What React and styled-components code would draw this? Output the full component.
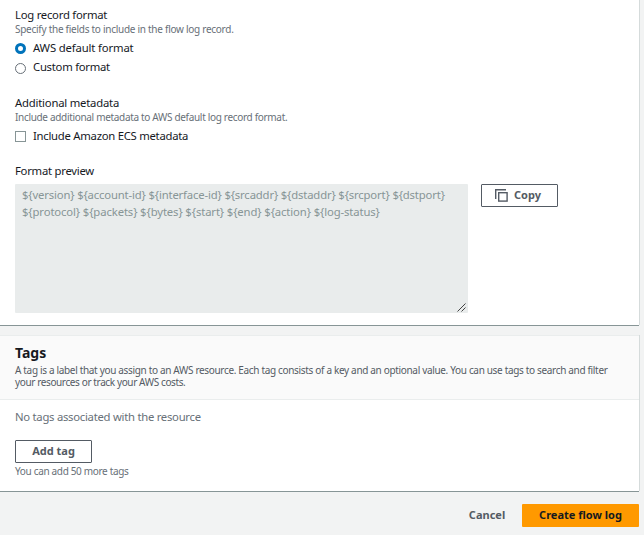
import React from "react";
import styled, { createGlobalStyle } from "styled-components";

const GlobalStyle = createGlobalStyle`
  * { box-sizing: border-box; }
  body {
    margin: 0;
    background: #f2f3f3;
    color: #16191f;
    font-family: "Noto Sans", "Open Sans", sans-serif;
    font-size: 12px;
    overflow: hidden;
  }
`;

const Page = styled.main`
  width: 644px;
  height: 535px;
  display: flex;
  flex-direction: column;
  align-items: flex-start;
  background: #f2f3f3;
`;

const Panel = styled.section`
  width: 639px;
  height: ${(p) => p.$height}px;
  margin-bottom: ${(p) => p.$gap}px;
  background: #fff;
  border-top: ${(p) => (p.$open ? "0" : "1px solid #eaeded")};
  box-shadow: 0 1px 0 #879596, 1px 0 0 #d5dbdb;
`;

const FormatBody = styled.div`
  padding: 7px 15px 0;
`;

const Text = styled.span`
  letter-spacing: ${(p) => p.$track || 0}px;
  white-space: nowrap;
`;

const Label = styled.h3`
  margin: 0;
  font-size: 11.3px;
  font-weight: 400;
  line-height: 16px;
`;

const Hint = styled.p`
  margin: ${(p) => p.$top || 0}px 0 0;
  font-size: 10px;
  line-height: 13px;
  color: #687078;
`;

const Choice = styled.label`
  display: flex;
  align-items: center;
  gap: 7px;
  height: 19px;
  font-size: 11.3px;
  line-height: 17px;
  margin-top: ${(p) => p.$top || 0}px;
  ${Text} { padding-bottom: 2px; }
`;

const Radio = styled.span`
  width: 11px;
  height: 11px;
  border-radius: 50%;
  background: #fff;
  border: ${(p) => (p.$checked ? "3.5px solid #0073bb" : "1px solid #687078")};
  margin-top: ${(p) => (p.$checked ? 0 : 2)}px;
`;

const Checkbox = styled.span`
  width: 11px;
  height: 11px;
  background: #fff;
  border: 1px solid #879596;
`;

const Group = styled.div`
  margin-bottom: ${(p) => p.$gap}px;
`;

const PreviewRow = styled.div`
  display: flex;
  align-items: flex-start;
  gap: 13px;
  margin-top: 5px;
`;

const Preview = styled.div`
  width: 453px;
  height: 129px;
  padding: 2px 7px 3px;
  display: flex;
  flex-direction: column;
  background: #e9ecec;
  border-radius: 1px;
  color: #879596;
  font-size: 11.3px;
  line-height: 17px;
  svg { margin: auto -5px -2px auto; flex: none; }
`;

const Button = styled.button`
  display: flex;
  align-items: center;
  justify-content: center;
  gap: 6px;
  width: ${(p) => p.$width}px;
  height: 23px;
  padding: 0 ${(p) => p.$inset || 0}px 0 0;
  border: ${(p) => (p.$kind ? "0" : "1px solid #545b64")};
  border-radius: 1px;
  background: ${(p) => (p.$kind === "primary" ? "#ff9900" : p.$kind === "link" ? "transparent" : "#fff")};
  color: ${(p) => (p.$kind === "primary" ? "#16191f" : "#545b64")};
  font: 700 11px/17px "Noto Sans", "Open Sans", sans-serif;
  ${Text} { padding-bottom: 2px; }
`;

const TagsHeader = styled.header`
  height: 64px;
  padding: 8px 15px 0;
  background: #fafafa;
  border-bottom: 1px solid #eaeded;
`;

const Title = styled.h2`
  margin: 0;
  font-size: 14px;
  line-height: 18px;
  font-weight: 700;
`;

const Description = styled.p`
  display: flex;
  flex-direction: column;
  margin: 2px 0 0;
  font-size: 10px;
  line-height: 12px;
  color: #545b64;
`;

const TagsBody = styled.div`
  padding: 8px 15px 0;
`;

const Empty = styled.p`
  margin: 0 0 14px;
  font-size: 11.3px;
  line-height: 18px;
  color: #687078;
`;

const Footer = styled.footer`
  width: 639px;
  display: flex;
  justify-content: flex-end;
  gap: 17px;
`;

const CopyIcon = () => (
  <svg width="13" height="13" viewBox="0 0 13 13" fill="none" stroke="#545b64" strokeWidth="1.4">
    <path d="M0.7 10V0.7H11" />
    <rect x="3.7" y="3.7" width="8.4" height="8.4" />
  </svg>
);

const Grip = () => (
  <svg width="9" height="9" viewBox="0 0 9 9" stroke="#444" strokeWidth="1">
    <path d="M0.5 8.5L8.5 0.5M4.5 8.5L8.5 4.5" />
  </svg>
);

export default function App() {
  return (
    <>
      <GlobalStyle />
      <Page>
        <Panel $height={325} $gap={10} $open>
          <FormatBody>
            <Group $gap={18}>
              <Label><Text $track={-0.25}>Log record format</Text></Label>
              <Hint><Text $track={-0.27}>Specify the fields to include in the flow log record.</Text></Hint>
              <Choice $top={3}><Radio $checked /><Text $track={-0.15}>AWS default format</Text></Choice>
              <Choice><Radio /><Text $track={-0.26}>Custom format</Text></Choice>
            </Group>
            <Group $gap={17}>
              <Label><Text $track={-0.21}>Additional metadata</Text></Label>
              <Hint><Text $track={-0.32}>Include additional metadata to AWS default log record format.</Text></Hint>
              <Choice $top={3}><Checkbox /><Text $track={-0.26}>Include Amazon ECS metadata</Text></Choice>
            </Group>
            <Label><Text $track={-0.25}>Format preview</Text></Label>
            <PreviewRow>
              <Preview>
                <Text $track={-0.16}>{"${version} ${account-id} ${interface-id} ${srcaddr} ${dstaddr} ${srcport} ${dstport}"}</Text>
                <Text $track={-0.12}>{"${protocol} ${packets} ${bytes} ${start} ${end} ${action} ${log-status}"}</Text>
                <Grip />
              </Preview>
              <Button $width={77} $inset={3}><CopyIcon /><Text>Copy</Text></Button>
            </PreviewRow>
          </FormatBody>
        </Panel>
        <Panel $height={156} $gap={13}>
          <TagsHeader>
            <Title><Text>Tags</Text></Title>
            <Description>
              <Text $track={-0.33}>A tag is a label that you assign to an AWS resource. Each tag consists of a key and an optional value. You can use tags to search and filter</Text>
              <Text $track={-0.38}>your resources or track your AWS costs.</Text>
            </Description>
          </TagsHeader>
          <TagsBody>
            <Empty><Text $track={-0.27}>No tags associated with the resource</Text></Empty>
            <Button $width={77}><Text>Add tag</Text></Button>
            <Hint $top={2}><Text $track={-0.33}>You can add 50 more tags</Text></Hint>
          </TagsBody>
        </Panel>
        <Footer>
          <Button $kind="link" $width={36}><Text>Cancel</Text></Button>
          <Button $kind="primary" $width={117}><Text>Create flow log</Text></Button>
        </Footer>
      </Page>
    </>
  );
}
